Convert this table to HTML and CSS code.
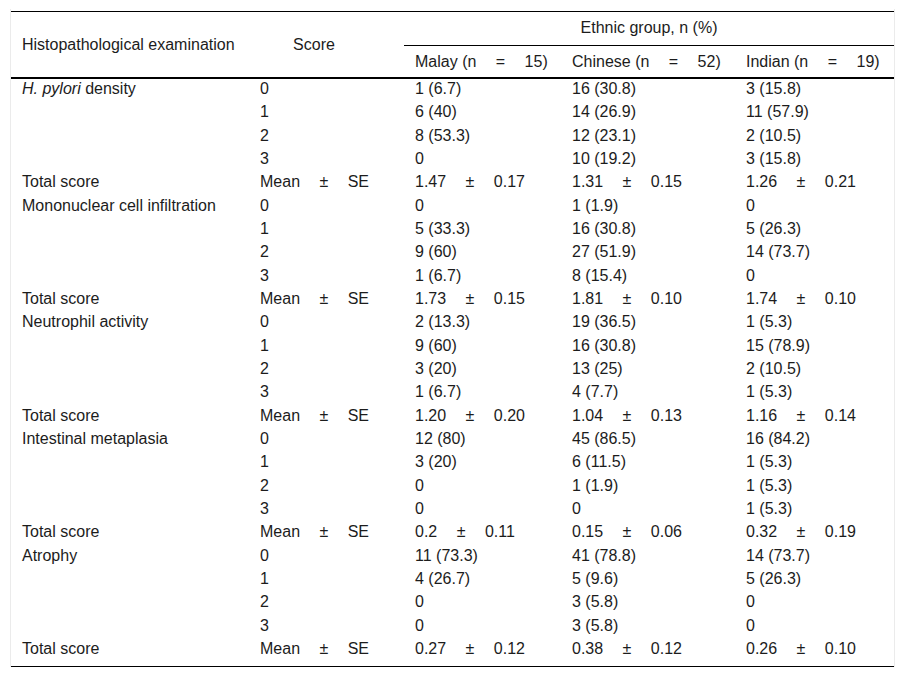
FILE: index.html
```html
<!DOCTYPE html>
<html lang="en">
<head>
<meta charset="utf-8">
<title>Histopathological examination by ethnic group</title>
<link rel="stylesheet" href="styles.css">
</head>
<body>
<div class="frame">
<table class="data">
<colgroup>
<col class="c1"><col class="c2"><col class="c3"><col class="c4"><col class="c5">
</colgroup>
<thead>
<tr>
<th rowspan="2" class="h-left">Histopathological examination</th>
<th rowspan="2" class="h-center">Score</th>
<th colspan="3" class="h-group">Ethnic group, n (%)</th>
</tr>
<tr>
<th class="h-sub">Malay (n <span class="op">=</span> 15)</th>
<th class="h-sub">Chinese (n <span class="op">=</span> 52)</th>
<th class="h-sub">Indian (n <span class="op">=</span> 19)</th>
</tr>
</thead>
<tbody>
<tr><td><i>H. pylori</i> density</td><td>0</td><td>1 (6.7)</td><td>16 (30.8)</td><td>3 (15.8)</td></tr>
<tr><td></td><td>1</td><td>6 (40)</td><td>14 (26.9)</td><td>11 (57.9)</td></tr>
<tr><td></td><td>2</td><td>8 (53.3)</td><td>12 (23.1)</td><td>2 (10.5)</td></tr>
<tr><td></td><td>3</td><td>0</td><td>10 (19.2)</td><td>3 (15.8)</td></tr>
<tr><td>Total score</td><td>Mean <span class="op">±</span> SE</td><td>1.47 <span class="op">±</span> 0.17</td><td>1.31 <span class="op">±</span> 0.15</td><td>1.26 <span class="op">±</span> 0.21</td></tr>

<tr><td>Mononuclear cell infiltration</td><td>0</td><td>0</td><td>1 (1.9)</td><td>0</td></tr>
<tr><td></td><td>1</td><td>5 (33.3)</td><td>16 (30.8)</td><td>5 (26.3)</td></tr>
<tr><td></td><td>2</td><td>9 (60)</td><td>27 (51.9)</td><td>14 (73.7)</td></tr>
<tr><td></td><td>3</td><td>1 (6.7)</td><td>8 (15.4)</td><td>0</td></tr>
<tr><td>Total score</td><td>Mean <span class="op">±</span> SE</td><td>1.73 <span class="op">±</span> 0.15</td><td>1.81 <span class="op">±</span> 0.10</td><td>1.74 <span class="op">±</span> 0.10</td></tr>

<tr><td>Neutrophil activity</td><td>0</td><td>2 (13.3)</td><td>19 (36.5)</td><td>1 (5.3)</td></tr>
<tr><td></td><td>1</td><td>9 (60)</td><td>16 (30.8)</td><td>15 (78.9)</td></tr>
<tr><td></td><td>2</td><td>3 (20)</td><td>13 (25)</td><td>2 (10.5)</td></tr>
<tr><td></td><td>3</td><td>1 (6.7)</td><td>4 (7.7)</td><td>1 (5.3)</td></tr>
<tr><td>Total score</td><td>Mean <span class="op">±</span> SE</td><td>1.20 <span class="op">±</span> 0.20</td><td>1.04 <span class="op">±</span> 0.13</td><td>1.16 <span class="op">±</span> 0.14</td></tr>

<tr><td>Intestinal metaplasia</td><td>0</td><td>12 (80)</td><td>45 (86.5)</td><td>16 (84.2)</td></tr>
<tr><td></td><td>1</td><td>3 (20)</td><td>6 (11.5)</td><td>1 (5.3)</td></tr>
<tr><td></td><td>2</td><td>0</td><td>1 (1.9)</td><td>1 (5.3)</td></tr>
<tr><td></td><td>3</td><td>0</td><td>0</td><td>1 (5.3)</td></tr>
<tr><td>Total score</td><td>Mean <span class="op">±</span> SE</td><td>0.2 <span class="op">±</span> 0.11</td><td>0.15 <span class="op">±</span> 0.06</td><td>0.32 <span class="op">±</span> 0.19</td></tr>

<tr><td>Atrophy</td><td>0</td><td>11 (73.3)</td><td>41 (78.8)</td><td>14 (73.7)</td></tr>
<tr><td></td><td>1</td><td>4 (26.7)</td><td>5 (9.6)</td><td>5 (26.3)</td></tr>
<tr><td></td><td>2</td><td>0</td><td>3 (5.8)</td><td>0</td></tr>
<tr><td></td><td>3</td><td>0</td><td>3 (5.8)</td><td>0</td></tr>
<tr class="last"><td>Total score</td><td>Mean <span class="op">±</span> SE</td><td>0.27 <span class="op">±</span> 0.12</td><td>0.38 <span class="op">±</span> 0.12</td><td>0.26 <span class="op">±</span> 0.10</td></tr>
</tbody>
</table>
</div>
</body>
</html>
```

FILE: styles.css
```css
html, body {
  margin: 0;
  padding: 0;
  background: #ffffff;
}

body {
  font-family: "Liberation Sans", Arial, sans-serif;
  font-size: 16px;
  color: #1c1c1c;
}

.frame {
  margin: 9px 0 0 10px;
  width: 883px;
  padding-top: 2px;
  border-left: 1px solid #ebebeb;
  border-right: 1px solid #ebebeb;
}

.data {
  width: 883px;
  border-collapse: collapse;
  table-layout: fixed;
  border-top: 1px solid #000;
  border-bottom: 1px solid #000;
}

.c1 { width: 238px; }
.c2 { width: 155px; }
.c3 { width: 157px; }
.c4 { width: 174px; }
.c5 { width: 159px; }

th {
  font-weight: normal;
  text-align: left;
  padding: 6px 11px 6px 11px;
  line-height: 19px;
  white-space: nowrap;
}

.h-left {
  vertical-align: middle;
  border-bottom: 2px solid #000;
}

.h-center {
  text-align: center;
  vertical-align: middle;
  padding-right: 36px;
  border-bottom: 2px solid #000;
}

.h-group {
  text-align: center;
  padding-bottom: 8px;
  border-bottom: 1px solid #000;
}

.h-sub {
  border-bottom: 2px solid #000;
  padding-top: 6px;
  padding-bottom: 6px;
}

td {
  padding: 1px 11px 4.33px 11px;
  line-height: 18px;
  vertical-align: top;
  white-space: nowrap;
}

.last td {
  padding-bottom: 8px;
}

.op {
  margin: 0 15px;
}
```
